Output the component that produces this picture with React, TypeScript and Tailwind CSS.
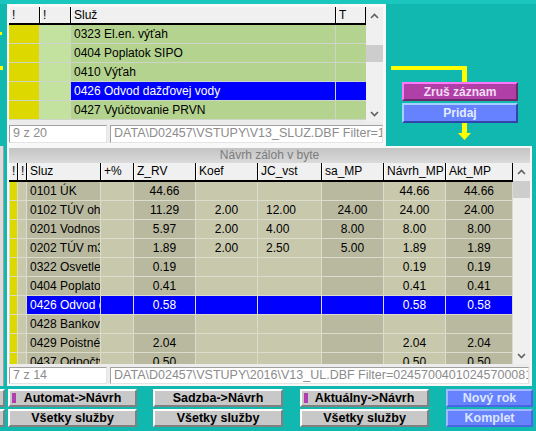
import React from "react";

// Horní tabulka služieb
const TOP_ROWS = [
  "0323 El.en. výťah",
  "0404 Poplatok SIPO",
  "0410 Výťah",
  "0426 Odvod dažďovej vody",
  "0427 Vyúčtovanie PRVN",
];
const TOP_SELECTED = 3;

// Spodná tabulka - návrh záloh
const COLS = [
  { key: "sluz", label: "Sluz", w: "w-[74px]", dark: true, align: "left" },
  { key: "pct", label: "+%", w: "w-[33px]", dark: false, align: "center" },
  { key: "zrv", label: "Z_RV", w: "w-[62px]", dark: true, align: "center" },
  { key: "koef", label: "Koef", w: "w-[62px]", dark: false, align: "center" },
  { key: "jc", label: "JC_vst", w: "w-[64px]", dark: false, align: "jc" },
  { key: "sa", label: "sa_MP", w: "w-[62px]", dark: true, align: "center" },
  { key: "navrh", label: "Návrh_MP", w: "w-[62px]", dark: false, align: "center" },
  { key: "akt", label: "Akt_MP", w: "w-[67px]", dark: true, align: "center" },
] as const;

const ROWS: string[][] = [
  ["0101 ÚK", "", "44.66", "", "", "", "44.66", "44.66"],
  ["0102 TÚV ohrev", "", "11.29", "2.00", "12.00", "24.00", "24.00", "24.00"],
  ["0201 Vodnostočné", "", "5.97", "2.00", "4.00", "8.00", "8.00", "8.00"],
  ["0202 TÚV m3 vody", "", "1.89", "2.00", "2.50", "5.00", "1.89", "1.89"],
  ["0322 Osvetlenie", "", "0.19", "", "", "", "0.19", "0.19"],
  ["0404 Poplatok SIPO", "", "0.41", "", "", "", "0.41", "0.41"],
  ["0426 Odvod dažďovej vody", "", "0.58", "", "", "", "0.58", "0.58"],
  ["0428 Bankové poplatky", "", "", "", "", "", "", ""],
  ["0429 Poistné", "", "2.04", "", "", "", "2.04", "2.04"],
  ["0437 Odpočty", "", "0.50", "", "", "", "0.50", "0.50"],
];
const SELECTED = 6;

function Chevron({ up }: { up?: boolean }) {
  return (
    <svg width="9" height="6" viewBox="0 0 9 6">
      <polyline
        points={up ? "1,5 4.5,1.5 8,5" : "1,1 4.5,4.5 8,1"}
        fill="none"
        stroke="#606060"
        strokeWidth="1.6"
      />
    </svg>
  );
}

function Scrollbar({ thumbTop, h }: { thumbTop: string; h: string }) {
  return (
    <div className={`w-[17px] ${h} bg-[#f0f0f0] flex flex-col`}>
      <div className="h-[18px] flex items-center justify-center shrink-0">
        <Chevron up />
      </div>
      <div className={`${thumbTop} h-[17px] bg-[#cdcdcd] shrink-0`} />
      <div className="flex-1" />
      <div className="h-[16px] flex items-center justify-center shrink-0">
        <Chevron />
      </div>
    </div>
  );
}

function HeadCell({ w, children }: { w: string; children?: React.ReactNode }) {
  return (
    <div
      className={`${w} h-full shrink-0 bg-[#f0f0f0] border-l border-l-white border-r border-r-black pl-[2px] leading-[17px] overflow-hidden whitespace-nowrap`}
    >
      {children}
    </div>
  );
}

function StatusBox({ w, children }: { w: string; children: React.ReactNode }) {
  return (
    <div
      className={`${w} h-full bg-white border border-t-[#a0a0a0] border-l-[#a0a0a0] border-b-[#e4e4e4] border-r-[#e4e4e4] pl-[3px] text-[#8c8c8c] text-[12.5px] leading-[15px] overflow-hidden whitespace-nowrap shrink-0`}
    >
      {children}
    </div>
  );
}

function TopPanel() {
  return (
    <div className="w-[379px] h-[142px] bg-[#ececec] border-t-[3px] border-l-2 border-r-[3px] border-b-[3px] border-[#f8f8f8] flex flex-col">
      <div className="flex h-[115px]">
        <div className="w-[357px] flex flex-col">
          <div className="h-[18px] flex border-b-2 border-black">
            <HeadCell w="w-[31px]">!</HeadCell>
            <HeadCell w="w-[31px]">!</HeadCell>
            <HeadCell w="w-[265px]">Služ</HeadCell>
            <HeadCell w="w-[30px]">T</HeadCell>
          </div>
          {TOP_ROWS.map((r, i) => {
            const sel = i === TOP_SELECTED;
            return (
              <div key={r} className="h-[19px] flex border-b border-[#cfd4c8]">
                <div className="w-[31px] bg-[#dcd800] border-r border-[#cfd4c8]" />
                <div className="w-[31px] bg-[#c3e19f] border-r border-[#cfd4c8]" />
                <div
                  className={`w-[265px] pl-[3px] leading-[18px] border-r border-[#cfd4c8] ${
                    sel ? "bg-[#0000ff] text-white" : "bg-[#b4d38e] text-black"
                  }`}
                >
                  {r}
                </div>
                <div className={`w-[30px] ${sel ? "bg-[#0000ff]" : "bg-[#b4d38e]"}`} />
              </div>
            );
          })}
        </div>
        <Scrollbar thumbTop="mt-[20px]" h="h-[115px]" />
      </div>
      <div className="mt-[3px] h-[18px] flex gap-[3px]">
        <StatusBox w="w-[98px]">9 z 20</StatusBox>
        <StatusBox w="w-[273px]">DATA\D02457\VSTUPY\V13_SLUZ.DBF Filter=1200245700</StatusBox>
      </div>
    </div>
  );
}

function cellAlign(a: string) {
  if (a === "left") return "pl-[3px] text-left";
  if (a === "jc") return "pl-[8px] text-left";
  return "text-center";
}

function BottomPanel() {
  return (
    <div className="w-[525px] h-[240px] bg-[#ececec] border-2 border-[#f8f8f8] flex flex-col">
      <div className="h-[15px] bg-gradient-to-b from-[#c4c4c4] to-[#dadada] text-center text-[#7c7c7c] leading-[15px]">
        Návrh záloh v byte
      </div>
      <div className="flex h-[201px]">
        <div className="w-[504px] flex flex-col">
          <div className="h-[19px] flex border-b-2 border-black shrink-0">
            <HeadCell w="w-[9px]">!</HeadCell>
            <HeadCell w="w-[9px]">!</HeadCell>
            {COLS.map((c) => (
              <HeadCell key={c.key} w={c.w}>
                {c.label}
              </HeadCell>
            ))}
          </div>
          <div className="h-[182px] overflow-hidden">
            {ROWS.map((r, i) => {
              const sel = i === SELECTED;
              return (
                <div key={r[0]} className="h-[19px] flex border-b border-[#dcdccc]">
                  <div className="w-[9px] shrink-0 bg-[#dcd800] border-x border-[#dcdccc]" />
                  <div className="w-[9px] shrink-0 bg-[#c8c8ad] border-r border-[#dcdccc]" />
                  {COLS.map((c, j) => (
                    <div
                      key={c.key}
                      className={`${c.w} shrink-0 border-r border-[#dcdccc] leading-[18px] overflow-hidden whitespace-nowrap ${cellAlign(
                        c.align,
                      )} ${
                        sel
                          ? "bg-[#0000ff] text-white"
                          : c.dark
                            ? "bg-[#b9b99f] text-black"
                            : "bg-[#c8c8ad] text-black"
                      }`}
                    >
                      {r[j]}
                    </div>
                  ))}
                </div>
              );
            })}
          </div>
        </div>
        <Scrollbar thumbTop="mt-0" h="h-[201px]" />
      </div>
      <div className="mt-[3px] h-[17px] flex gap-[3px]">
        <StatusBox w="w-[98px]">7 z 14</StatusBox>
        <StatusBox w="w-[419px]">
          DATA\D02457\VSTUPY\2016\V13_UL.DBF Filter=024570040102457000810002457
        </StatusBox>
      </div>
    </div>
  );
}

function GrayButton({ w, label, mark }: { w: string; label: string; mark?: boolean }) {
  return (
    <button
      className={`${w} h-full relative bg-[#c8c8c8] border-2 border-t-white border-l-white border-b-[#808080] border-r-[#808080] font-bold text-black text-[12.5px] leading-[14px] whitespace-nowrap shrink-0`}
    >
      {mark && <span className="absolute left-[2px] top-[2px] w-[4px] h-[10px] bg-[#b040b0]" />}
      {label}
    </button>
  );
}

function BlueButton({ label }: { label: string }) {
  return (
    <button className="w-[87px] h-full bg-[#6682ff] border-2 border-t-[#9fb8ff] border-l-[#9fb8ff] border-b-[#4a66e6] border-r-[#4a66e6] font-bold text-[#dde5ff] text-[12.5px] leading-[14px] shrink-0">
      {label}
    </button>
  );
}

export default function App() {
  return (
    <div className="w-[536px] h-[431px] overflow-hidden bg-[#10b8b0] text-[12px] text-black font-[family-name:'Liberation_Sans',Arial,sans-serif] flex flex-col">
      <div className="h-[4px] bg-[#1ac6be]" />

      {/* Horná časť */}
      <div className="flex h-[142px]">
        <div className="w-[7px] flex flex-col">
          <div className="mt-[28px] w-[2px] h-[3px] bg-[#ffff00]" />
          <div className="mt-[31px] w-[3px] h-[4px] bg-[#ffff00]" />
        </div>
        <TopPanel />
        <div className="relative w-[150px] h-full">
          <svg className="absolute inset-0" width="150" height="142" viewBox="0 0 150 142">
            <rect x="5" y="62" width="76" height="4" fill="#ffff00" />
            <rect x="76" y="62" width="5" height="16" fill="#ffff00" />
            <rect x="76" y="119" width="5" height="11" fill="#ffff00" />
            <polygon points="72,129 85,129 78.5,136" fill="#ffff00" />
          </svg>
          <div className="relative ml-[16px] mt-[78px] w-[116px] flex flex-col gap-[2px]">
            <button className="h-[19px] bg-[#b040a8] border-2 border-t-[#ff78ff] border-l-[#ff78ff] border-b-[#6a2a66] border-r-[#6a2a66] font-bold text-[#f4dcf4] text-[12px] leading-[14px]">
              Zruš záznam
            </button>
            <button className="h-[20px] bg-[#6682ff] border-2 border-t-[#a6d0ff] border-l-[#a6d0ff] border-b-[#3046a8] border-r-[#3046a8] font-bold text-[#e4ecff] text-[12px] leading-[14px]">
              Pridaj
            </button>
          </div>
        </div>
      </div>

      {/* Spodná časť */}
      <div className="flex h-[240px]">
        <div className="w-[4px] h-full bg-[#dcdcdc] border-r border-[#a0a0a0]" />
        <div className="w-[3px]" />
        <BottomPanel />
      </div>

      {/* Tlačidlá */}
      <div className="mt-[3px] flex flex-col gap-[2px]">
        <div className="h-[18px] flex">
          <div className="w-[5px] overflow-hidden flex justify-end shrink-0">
            <GrayButton w="w-[129px]" label="Ručne->Návrh" />
          </div>
          <div className="w-[3px] shrink-0" />
          <GrayButton w="w-[129px]" label="Automat->Návrh" mark />
          <div className="w-[16px] shrink-0" />
          <GrayButton w="w-[130px]" label="Sadzba->Návrh" />
          <div className="w-[17px] shrink-0" />
          <GrayButton w="w-[129px]" label="Aktuálny->Návrh" mark />
          <div className="w-[17px] shrink-0" />
          <BlueButton label="Nový rok" />
        </div>
        <div className="h-[18px] flex">
          <div className="w-[5px] overflow-hidden flex justify-end shrink-0">
            <GrayButton w="w-[129px]" label="" />
          </div>
          <div className="w-[3px] shrink-0" />
          <GrayButton w="w-[129px]" label="Všetky služby" />
          <div className="w-[16px] shrink-0" />
          <GrayButton w="w-[130px]" label="Všetky služby" />
          <div className="w-[17px] shrink-0" />
          <GrayButton w="w-[129px]" label="Všetky služby" />
          <div className="w-[17px] shrink-0" />
          <BlueButton label="Komplet" />
        </div>
      </div>
    </div>
  );
}
